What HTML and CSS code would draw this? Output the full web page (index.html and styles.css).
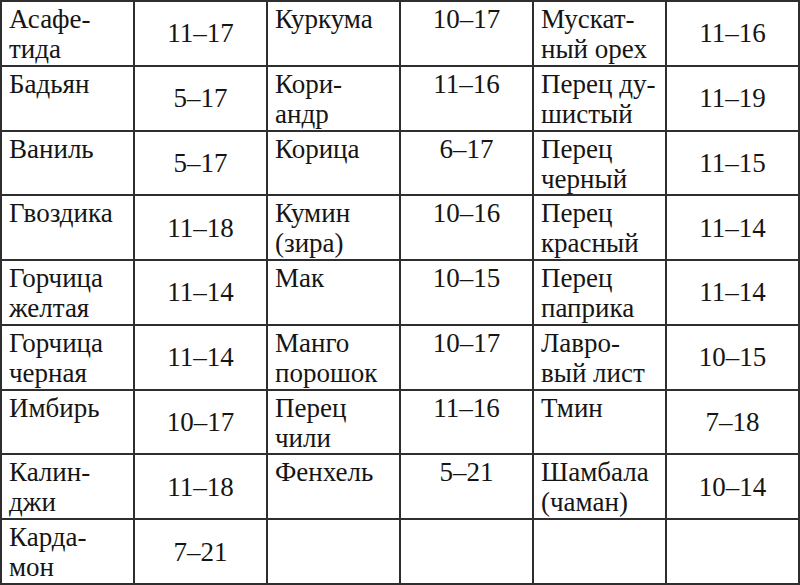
FILE: index.html
```html
<!DOCTYPE html>
<html lang="ru">
<head>
<meta charset="utf-8">
<link rel="stylesheet" href="styles.css">
</head>
<body class="page">
<div class="grid">
  <div class="cell name"><p class="t">Асафе-<br>тида</p></div><div class="cell num mid"><p class="t">11–17</p></div>
  <div class="cell name"><p class="t">Куркума</p></div><div class="cell num top"><p class="t">10–17</p></div>
  <div class="cell name"><p class="t">Мускат-<br>ный орех</p></div><div class="cell num mid"><p class="t">11–16</p></div>

  <div class="cell name"><p class="t">Бадьян</p></div><div class="cell num mid"><p class="t">5–17</p></div>
  <div class="cell name"><p class="t">Кори-<br>андр</p></div><div class="cell num top"><p class="t">11–16</p></div>
  <div class="cell name"><p class="t">Перец ду-<br>шистый</p></div><div class="cell num mid"><p class="t">11–19</p></div>

  <div class="cell name"><p class="t">Ваниль</p></div><div class="cell num mid"><p class="t">5–17</p></div>
  <div class="cell name"><p class="t">Корица</p></div><div class="cell num top"><p class="t">6–17</p></div>
  <div class="cell name"><p class="t">Перец<br>черный</p></div><div class="cell num mid"><p class="t">11–15</p></div>

  <div class="cell name"><p class="t">Гвоздика</p></div><div class="cell num mid"><p class="t">11–18</p></div>
  <div class="cell name"><p class="t">Кумин<br>(зира)</p></div><div class="cell num top"><p class="t">10–16</p></div>
  <div class="cell name"><p class="t">Перец<br>красный</p></div><div class="cell num mid"><p class="t">11–14</p></div>

  <div class="cell name"><p class="t">Горчица<br>желтая</p></div><div class="cell num mid"><p class="t">11–14</p></div>
  <div class="cell name"><p class="t">Мак</p></div><div class="cell num top"><p class="t">10–15</p></div>
  <div class="cell name"><p class="t">Перец<br>паприка</p></div><div class="cell num mid"><p class="t">11–14</p></div>

  <div class="cell name"><p class="t">Горчица<br>черная</p></div><div class="cell num mid"><p class="t">11–14</p></div>
  <div class="cell name"><p class="t">Манго<br>порошок</p></div><div class="cell num top"><p class="t">10–17</p></div>
  <div class="cell name"><p class="t">Лавро-<br>вый лист</p></div><div class="cell num mid"><p class="t">10–15</p></div>

  <div class="cell name"><p class="t">Имбирь</p></div><div class="cell num mid"><p class="t">10–17</p></div>
  <div class="cell name"><p class="t">Перец<br>чили</p></div><div class="cell num top"><p class="t">11–16</p></div>
  <div class="cell name"><p class="t">Тмин</p></div><div class="cell num mid"><p class="t">7–18</p></div>

  <div class="cell name"><p class="t">Калин-<br>джи</p></div><div class="cell num mid"><p class="t">11–18</p></div>
  <div class="cell name"><p class="t">Фенхель</p></div><div class="cell num top"><p class="t">5–21</p></div>
  <div class="cell name"><p class="t">Шамбала<br>(чаман)</p></div><div class="cell num mid"><p class="t">10–14</p></div>

  <div class="cell name"><p class="t">Карда-<br>мон</p></div><div class="cell num mid"><p class="t">7–21</p></div>
  <div class="cell name"></div><div class="cell num top"></div>
  <div class="cell name"></div><div class="cell num mid"></div>
</div>
</body>
</html>
```

FILE: styles.css
```css
body { margin: 0; }
.page { font-family: "Liberation Serif", "Times New Roman", serif !important; }
.grid { box-sizing: border-box; width: 800px; height: 585px; display: grid; grid-template-columns: repeat(6, minmax(0, 1fr)); grid-template-rows: repeat(9, minmax(0, 1fr)); gap: 2px; padding: 2px; background: #2e2e2e; font-family: "Liberation Serif", "Times New Roman", serif !important; }
.cell { background: #ffffff; overflow: hidden; font-family: "Liberation Serif", "Times New Roman", serif !important; }
.t { font-family: "Liberation Serif", "Times New Roman", serif !important; font-size: 27px; line-height: 30px; margin: 0; color: #151515; white-space: nowrap; }
.name { padding: 2px 0 0 7px; }
.num { display: flex; justify-content: center; }
.top { align-items: flex-start; padding-top: 2px; }
.mid { align-items: center; }
```
